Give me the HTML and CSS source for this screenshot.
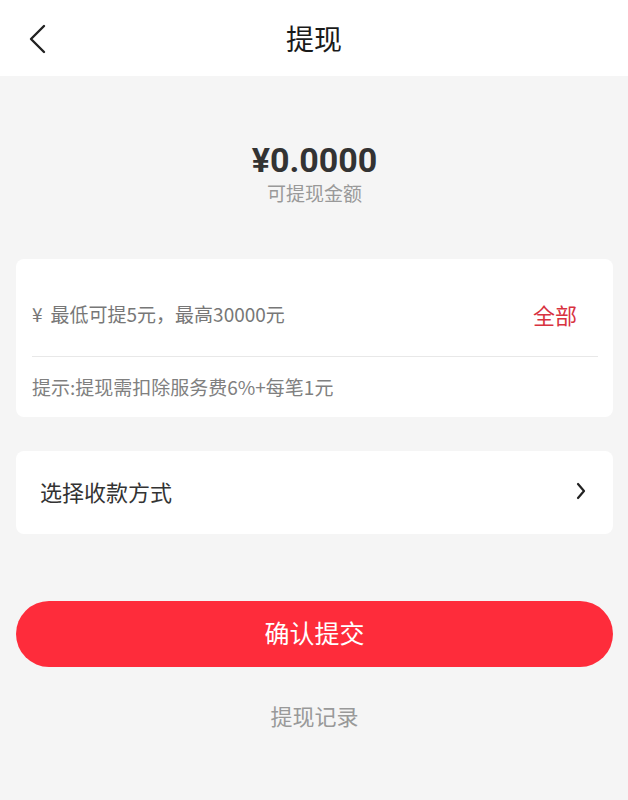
FILE: index.html
```html
<!DOCTYPE html>
<html lang="zh-CN">
<head>
<meta charset="utf-8">
<link rel="stylesheet" href="styles.css">
</head>
<body>
<header class="nav">
  <span class="back">
    <svg width="20" height="30" viewBox="0 0 20 30"><path d="M17 2 L4 15 L17 28" fill="none" stroke="#222" stroke-width="2.4" stroke-linecap="round" stroke-linejoin="round"/></svg>
  </span>
  <h1 class="title">提现</h1>
</header>
<main class="page">
  <section class="balance">
    <div class="amount">¥0.0000</div>
    <div class="label">可提现金额</div>
  </section>
  <section class="card input-card">
    <div class="input-row">
      <span class="placeholder"><span class="yen">¥</span>最低可提5元，最高30000元</span>
      <span class="all">全部</span>
    </div>
    <div class="hint">提示:提现需扣除服务费6%+每笔1元</div>
  </section>
  <section class="card method">
    <span class="method-text">选择收款方式</span>
    <svg width="12" height="20" viewBox="0 0 12 20"><path d="M3 3 L9 10 L3 17" fill="none" stroke="#222" stroke-width="2.2" stroke-linecap="round" stroke-linejoin="round"/></svg>
  </section>
  <button class="submit">确认提交</button>
  <div class="record">提现记录</div>
</main>
</body>
</html>
```
FILE: styles.css
```css
* { box-sizing: border-box; }
html, body { margin: 0; padding: 0; }
body {
  background: #f5f5f5;
  font-family: "Noto Sans CJK SC", Roboto, "Noto Sans", sans-serif;
  width: 628px;
  height: 800px;
  overflow: hidden;
}
.nav {
  height: 76px;
  background: #fff;
  display: flex;
  align-items: center;
  justify-content: center;
  position: relative;
}
.back {
  position: absolute;
  left: 27px;
  top: 24px;
  display: flex;
}
.title {
  margin: 0;
  font-size: 28px;
  font-weight: 400;
  color: #1a1a1a;
  line-height: 1;
}
.page {
  padding: 0 15px 0 16px;
  display: flex;
  flex-direction: column;
}
.balance {
  padding-top: 64px;
  padding-bottom: 2px;
  display: flex;
  flex-direction: column;
  align-items: center;
}
.amount {
  font-family: Roboto, "Noto Sans", sans-serif;
  font-weight: 700;
  font-size: 34px;
  color: #333;
  line-height: 40px;
}
.label {
  font-size: 19px;
  color: #999;
  line-height: 28px;
  margin-top: -1px;
}
.card {
  background: #fff;
  border-radius: 8px;
}
.input-card {
  margin-top: 50px;
  padding: 0 15px 0 16px;
  height: 158px;
}
.input-row {
  height: 98px;
  display: flex;
  align-items: center;
  justify-content: space-between;
  border-bottom: 1px solid #e8e8e8;
  padding-top: 12px;
}
.placeholder {
  font-size: 19px;
  color: #777;
}
.yen {
  margin-right: 8px;
}
.all {
  font-size: 22px;
  color: #d8323f;
  margin-right: 21px;
}
.hint {
  font-size: 19px;
  color: #808080;
  line-height: 60px;
}
.method {
  margin-top: 34px;
  height: 83px;
  display: flex;
  align-items: center;
  justify-content: space-between;
  padding: 0 26px 3px 24px;
}
.method-text {
  font-size: 22px;
  color: #333;
}
.submit {
  margin-top: 67px;
  height: 66px;
  border: none;
  border-radius: 33px;
  background: #fe2c3b;
  color: #fff;
  font-family: "Noto Sans CJK SC", sans-serif;
  font-size: 25px;
  width: 100%;
  padding: 0 0 4px;
}
.record {
  margin-top: 32px;
  text-align: center;
  font-size: 22px;
  color: #999;
}
```
